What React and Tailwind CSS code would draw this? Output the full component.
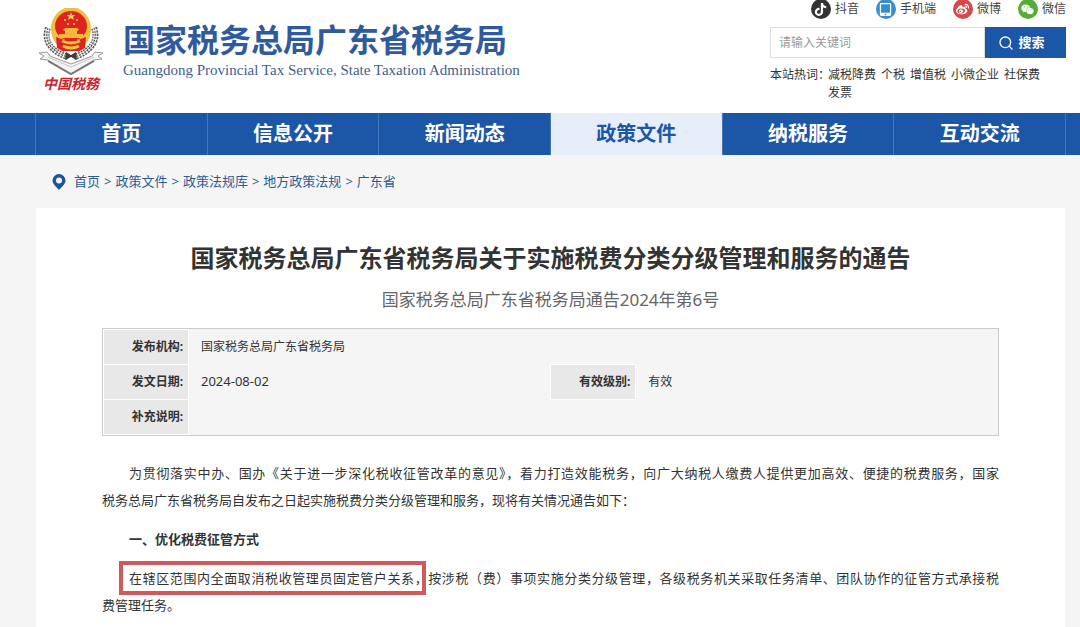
import React, { useState } from 'react'
import { Search } from 'lucide-react'
import { FaTiktok, FaWeibo, FaWeixin, FaTabletAlt } from 'react-icons/fa'

const channels = [
  { name: '抖音', icon: FaTiktok, color: 'bg-[#333333]' },
  { name: '手机端', icon: FaTabletAlt, color: 'bg-[#3b8ccb]' },
  { name: '微博', icon: FaWeibo, color: 'bg-[#d3494c]' },
  { name: '微信', icon: FaWeixin, color: 'bg-[#55ad35]' }
]

const hotWords = ['减税降费', '个税', '增值税', '小微企业', '社保费', '发票']

const navItems = ['首页', '信息公开', '新闻动态', '政策文件', '纳税服务', '互动交流']

const crumbs = ['首页', '政策文件', '政策法规库', '地方政策法规', '广东省']

function Emblem() {
  return (
    <svg viewBox="0 0 66 68" className="w-[66px] h-[68px]" aria-hidden="true">
      {/* wheat ears */}
      <g fill="none" stroke="#5a5a5a" strokeWidth="6" strokeDasharray="2 1">
        <path d="M10 20C5 32 13 44 30 49" />
        <path d="M56 20C61 32 53 44 36 49" />
      </g>
      <g fill="none" stroke="#eeeeee" strokeWidth="1">
        <path d="M9 20C4 33 13 45 29 50" />
        <path d="M11 20C7 32 14 43 30 48" />
        <path d="M57 20C62 33 53 45 37 50" />
        <path d="M55 20C59 32 52 43 36 48" />
      </g>
      {/* national emblem */}
      <ellipse cx="33" cy="21" rx="20" ry="22" fill="#edc13f" />
      <ellipse cx="33" cy="18" rx="16" ry="15" fill="#df2420" />
      <path d="M33 4l1 3h3l-2 2 1 3-3-2-3 2 1-3-2-2h3z" fill="#ffdc55" />
      <g fill="#ffdc55">
        <circle cx="27" cy="12" r="1" />
        <circle cx="30" cy="16" r="1" />
        <circle cx="36" cy="16" r="1" />
        <circle cx="39" cy="12" r="1" />
      </g>
      <path d="M27 20h12l2 2-2 1v3h6v4H21v-4h6v-3l-2-1z" fill="#f0b93c" />
      <path d="M18 29l8 3v12l-7-4zM48 29l-8 3v12l7-4z" fill="#df2420" />
      <path d="M25 32h16v11H25z" fill="#df2420" />
      <path d="M24 33q9 4 18 0M25 38q8 4 16 0" fill="none" stroke="#f0c43c" strokeWidth="3" />
      <path d="M28 44l5 3 5-3 1 8-6-3-6 3z" fill="#3c3c3c" />
      {/* open book */}
      <path d="M1 45l8-1 3 4 21 8 21-8 3-4 8 1-5 3 4 3-8 1-23 14L10 52l-8-1 4-3z" fill="#f4f4f4" stroke="#999" strokeWidth="1" />
      <path d="M10 49l23 10 23-10" fill="none" stroke="#c4c4c4" strokeWidth="1" />
      <path d="M10 53l23 13 23-13" fill="none" stroke="#777" strokeWidth="2" />
    </svg>
  )
}

function InfoLabel({ children }) {
  return (
    <th scope="row" className="h-[35px] border border-white bg-[#e8e8e8] pr-[5px] text-right font-bold">
      {children}
    </th>
  )
}

function Header() {
  const [keyword, setKeyword] = useState('')

  return (
    <header className="flex h-[113px] justify-between bg-white pl-9 pr-[14px]">
      <div className="flex">
        <div className="flex w-[70px] shrink-0 flex-col items-center pt-2">
          <Emblem />
          <span className="text-sm/4 font-bold italic text-[#c9252b]">中国税務</span>
        </div>
        <div className="pl-[17px] pt-5">
          <h1 className="whitespace-nowrap text-[32px]/10 font-bold text-[#2f5b9e]">国家税务总局广东省税务局</h1>
          <p className="whitespace-nowrap font-['Liberation_Serif',serif] text-[15px]/5 text-[#3f5f8c]">
            Guangdong Provincial Tax Service, State Taxation Administration
          </p>
        </div>
      </div>

      <div className="w-[296px] shrink-0">
        <ul className="flex h-[27px] justify-end gap-[17px]">
          {channels.map(({ name, icon: Icon, color }) => (
            <li key={name}>
              <a href="#" className="flex h-[18px] items-center gap-1 text-xs text-[#444]">
                <span className={`flex size-5 items-center justify-center rounded-full text-white ${color}`}>
                  <Icon size={13} />
                </span>
                {name}
              </a>
            </li>
          ))}
        </ul>
        <form className="flex h-[31px]" onSubmit={e => e.preventDefault()}>
          <input
            type="text"
            aria-label="请输入关键词"
            placeholder="请输入关键词"
            value={keyword}
            onChange={e => setKeyword(e.target.value)}
            className="min-w-0 flex-1 border border-[#ddd] px-2 text-xs placeholder:text-[#999]"
          />
          <button className="flex w-[81px] items-center justify-center gap-1 bg-[#1c56a6] pr-2 text-[13px] font-bold text-white">
            <Search size={16} />
            搜索
          </button>
        </form>
        <div className="flex pt-2 text-xs/[18px] text-[#333]">
          <span className="w-[58px] shrink-0 whitespace-nowrap">本站热词：</span>
          <div className="flex w-[216px] flex-wrap gap-x-[5px]">
            {hotWords.map(word => (
              <a key={word} href="#">{word}</a>
            ))}
          </div>
        </div>
      </div>
    </header>
  )
}

export default function App() {
  return (
    <div
      lang="zh-CN"
      className="min-h-screen bg-[#f5f5f5] font-['Noto_Sans','Noto_Sans_CJK_SC',sans-serif] text-[#333]"
    >
      <Header />

      <nav className="flex h-[42px] bg-[#1c56a6] pl-[35px] pr-[14px]">
        {navItems.map(item => (
          <a
            key={item}
            href="#"
            className={`flex flex-1 items-center justify-center border-l border-[#4377b9] text-xl font-bold last:border-r ${
              item === '政策文件' ? 'bg-[#e8eef9] text-[#1c56a6]' : 'text-white'
            }`}
          >
            {item}
          </a>
        ))}
      </nav>

      <div className="flex h-[53px] items-center gap-2 pl-[52px] text-[13px] text-[#2c5b94]">
        <svg viewBox="0 0 14 16" className="h-4 w-[14px]" aria-hidden="true">
          <path fillRule="evenodd" fill="#1f539b" d="M7 0a6.5 6.5 0 0 0-6.500 6.500C.5 10 4 12.500 7 16c3-3.500 6.500-6 6.500-9.500A6.500 6.500 0 0 0 7 0zm0 3.500a3 3 0 1 1 0 6 3 3 0 0 1 0-6z" />
        </svg>
        <div className="flex gap-1">
          {crumbs.map((crumb, i) => (
            <React.Fragment key={crumb}>
              {i > 0 && <span>&gt;</span>}
              <a href="#">{crumb}</a>
            </React.Fragment>
          ))}
        </div>
      </div>

      <main className="ml-9 mr-[15px] bg-white px-[66px] pb-2 pt-8">
        <h2 className="text-center text-2xl/9 font-bold">国家税务总局广东省税务局关于实施税费分类分级管理和服务的通告</h2>
        <p className="mt-3 text-center text-[17px]/6 text-[#666]">国家税务总局广东省税务局通告2024年第6号</p>

        <div className="mt-4 border border-[#ccc] bg-[#f5f5f5]">
          <table className="w-full table-fixed border-collapse text-xs">
            <colgroup>
              <col className="w-[85px]" />
              <col />
              <col className="w-[85px]" />
              <col />
            </colgroup>
            <tbody>
              <tr>
                <InfoLabel>发布机构:</InfoLabel>
                <td colSpan={3} className="pl-3">国家税务总局广东省税务局</td>
              </tr>
              <tr>
                <InfoLabel>发文日期:</InfoLabel>
                <td className="pl-3 text-[13px]">2024-08-02</td>
                <InfoLabel>有效级别:</InfoLabel>
                <td className="pl-3">有效</td>
              </tr>
              <tr>
                <InfoLabel>补充说明:</InfoLabel>
                <td colSpan={3} />
              </tr>
            </tbody>
          </table>
        </div>

        <article className="mt-6 space-y-3 text-justify text-[13px]/[27px]">
          <p className="indent-[27px]">
            为贯彻落实中办、国办《关于进一步深化税收征管改革的意见》，着力打造效能税务，向广大纳税人缴费人提供更加高效、便捷的税费服务，国家
            <span className="whitespace-nowrap">税务总局广东省税务局</span>
            自发布之日起实施税费分类分级管理和服务，现将有关情况通告如下：
          </p>
          <h3 className="indent-[27px] font-bold">一、优化税费征管方式</h3>
          <p className="indent-[27px]">
            <span className="relative">
              在辖区范围内全面取消税收管理员固定管户关系，
              <span className="absolute -left-[10px] -inset-y-2 right-[2px] border-4 border-[#d0595e]" />
            </span>
            按涉税（费）事项实施分类分级管理，各级税务机关采取任务清单、团队协作的征管方式承接税
            <span className="whitespace-nowrap">费管理任务。</span>
          </p>
        </article>
      </main>
    </div>
  )
}
